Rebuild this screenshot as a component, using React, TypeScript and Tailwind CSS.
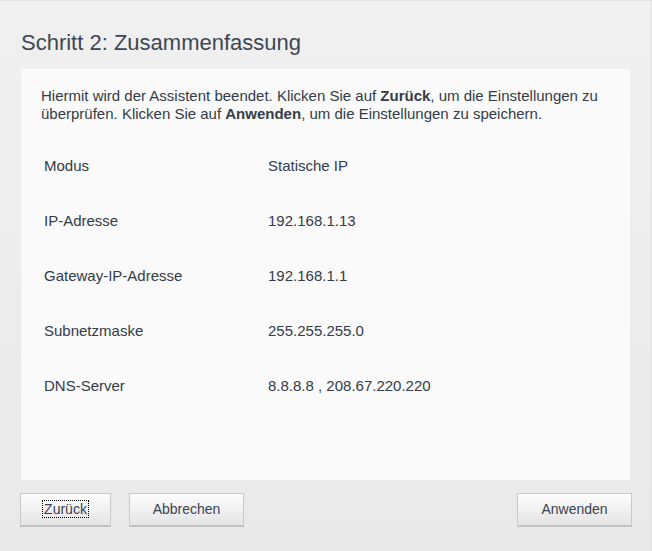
export default function App() {
  const rows = [
    ['Modus', 'Statische IP'],
    ['IP-Adresse', '192.168.1.13'],
    ['Gateway-IP-Adresse', '192.168.1.1'],
    ['Subnetzmaske', '255.255.255.0'],
    ['DNS-Server', '8.8.8.8 , 208.67.220.220'],
  ];

  const btn =
    'h-[34px] w-[115px] border border-[#c9c9c9] border-b-2 border-b-[#c2c2c2] bg-gradient-to-b from-[#fdfdfd] to-[#e4e4e4] text-[14px] text-[#3a4350]';

  return (
    <div
      className="w-[652px] h-[551px] flex flex-col border-t border-r border-[#e2e2e2] bg-gradient-to-b from-[#f0f0f0] to-[#e9e9e9] text-[#333c48]"
      style={{ fontFamily: '"Liberation Sans", Arial, sans-serif' }}
    >
      {/* Title */}
      <h1 className="pl-[21px] pt-[29px] h-[68px] text-[22px] leading-[26px] text-[#3d4753]">
        Schritt 2: Zusammenfassung
      </h1>

      {/* Panel */}
      <div className="ml-[21px] w-[609px] h-[411px] bg-[#fafafa] pl-5 pr-6 pt-[18px] text-[15px]">
        <p className="leading-[18px]">
          Hiermit wird der Assistent beendet. Klicken Sie auf <b>Zurück</b>, um die Einstellungen zu
          überprüfen. Klicken Sie auf <b>Anwenden</b>, um die Einstellungen zu speichern.
        </p>
        <div className="mt-[16px] pl-[3px] flex flex-col">
          {rows.map(([k, v]) => (
            <div key={k} className="h-[55px] flex items-center">
              <span className="w-[224px]">{k}</span>
              <span>{v}</span>
            </div>
          ))}
        </div>
      </div>

      {/* Buttons */}
      <div className="mt-[13px] pl-[20px] pr-[19px] flex">
        <button className={btn.replace('w-[115px]', 'w-[91px]')}>
          <span className="outline outline-1 outline-dotted outline-black px-[1px]">Zurück</span>
        </button>
        <button className={btn + ' ml-[18px]'}>Abbrechen</button>
        <button className={btn + ' ml-auto'}>Anwenden</button>
      </div>
    </div>
  );
}
